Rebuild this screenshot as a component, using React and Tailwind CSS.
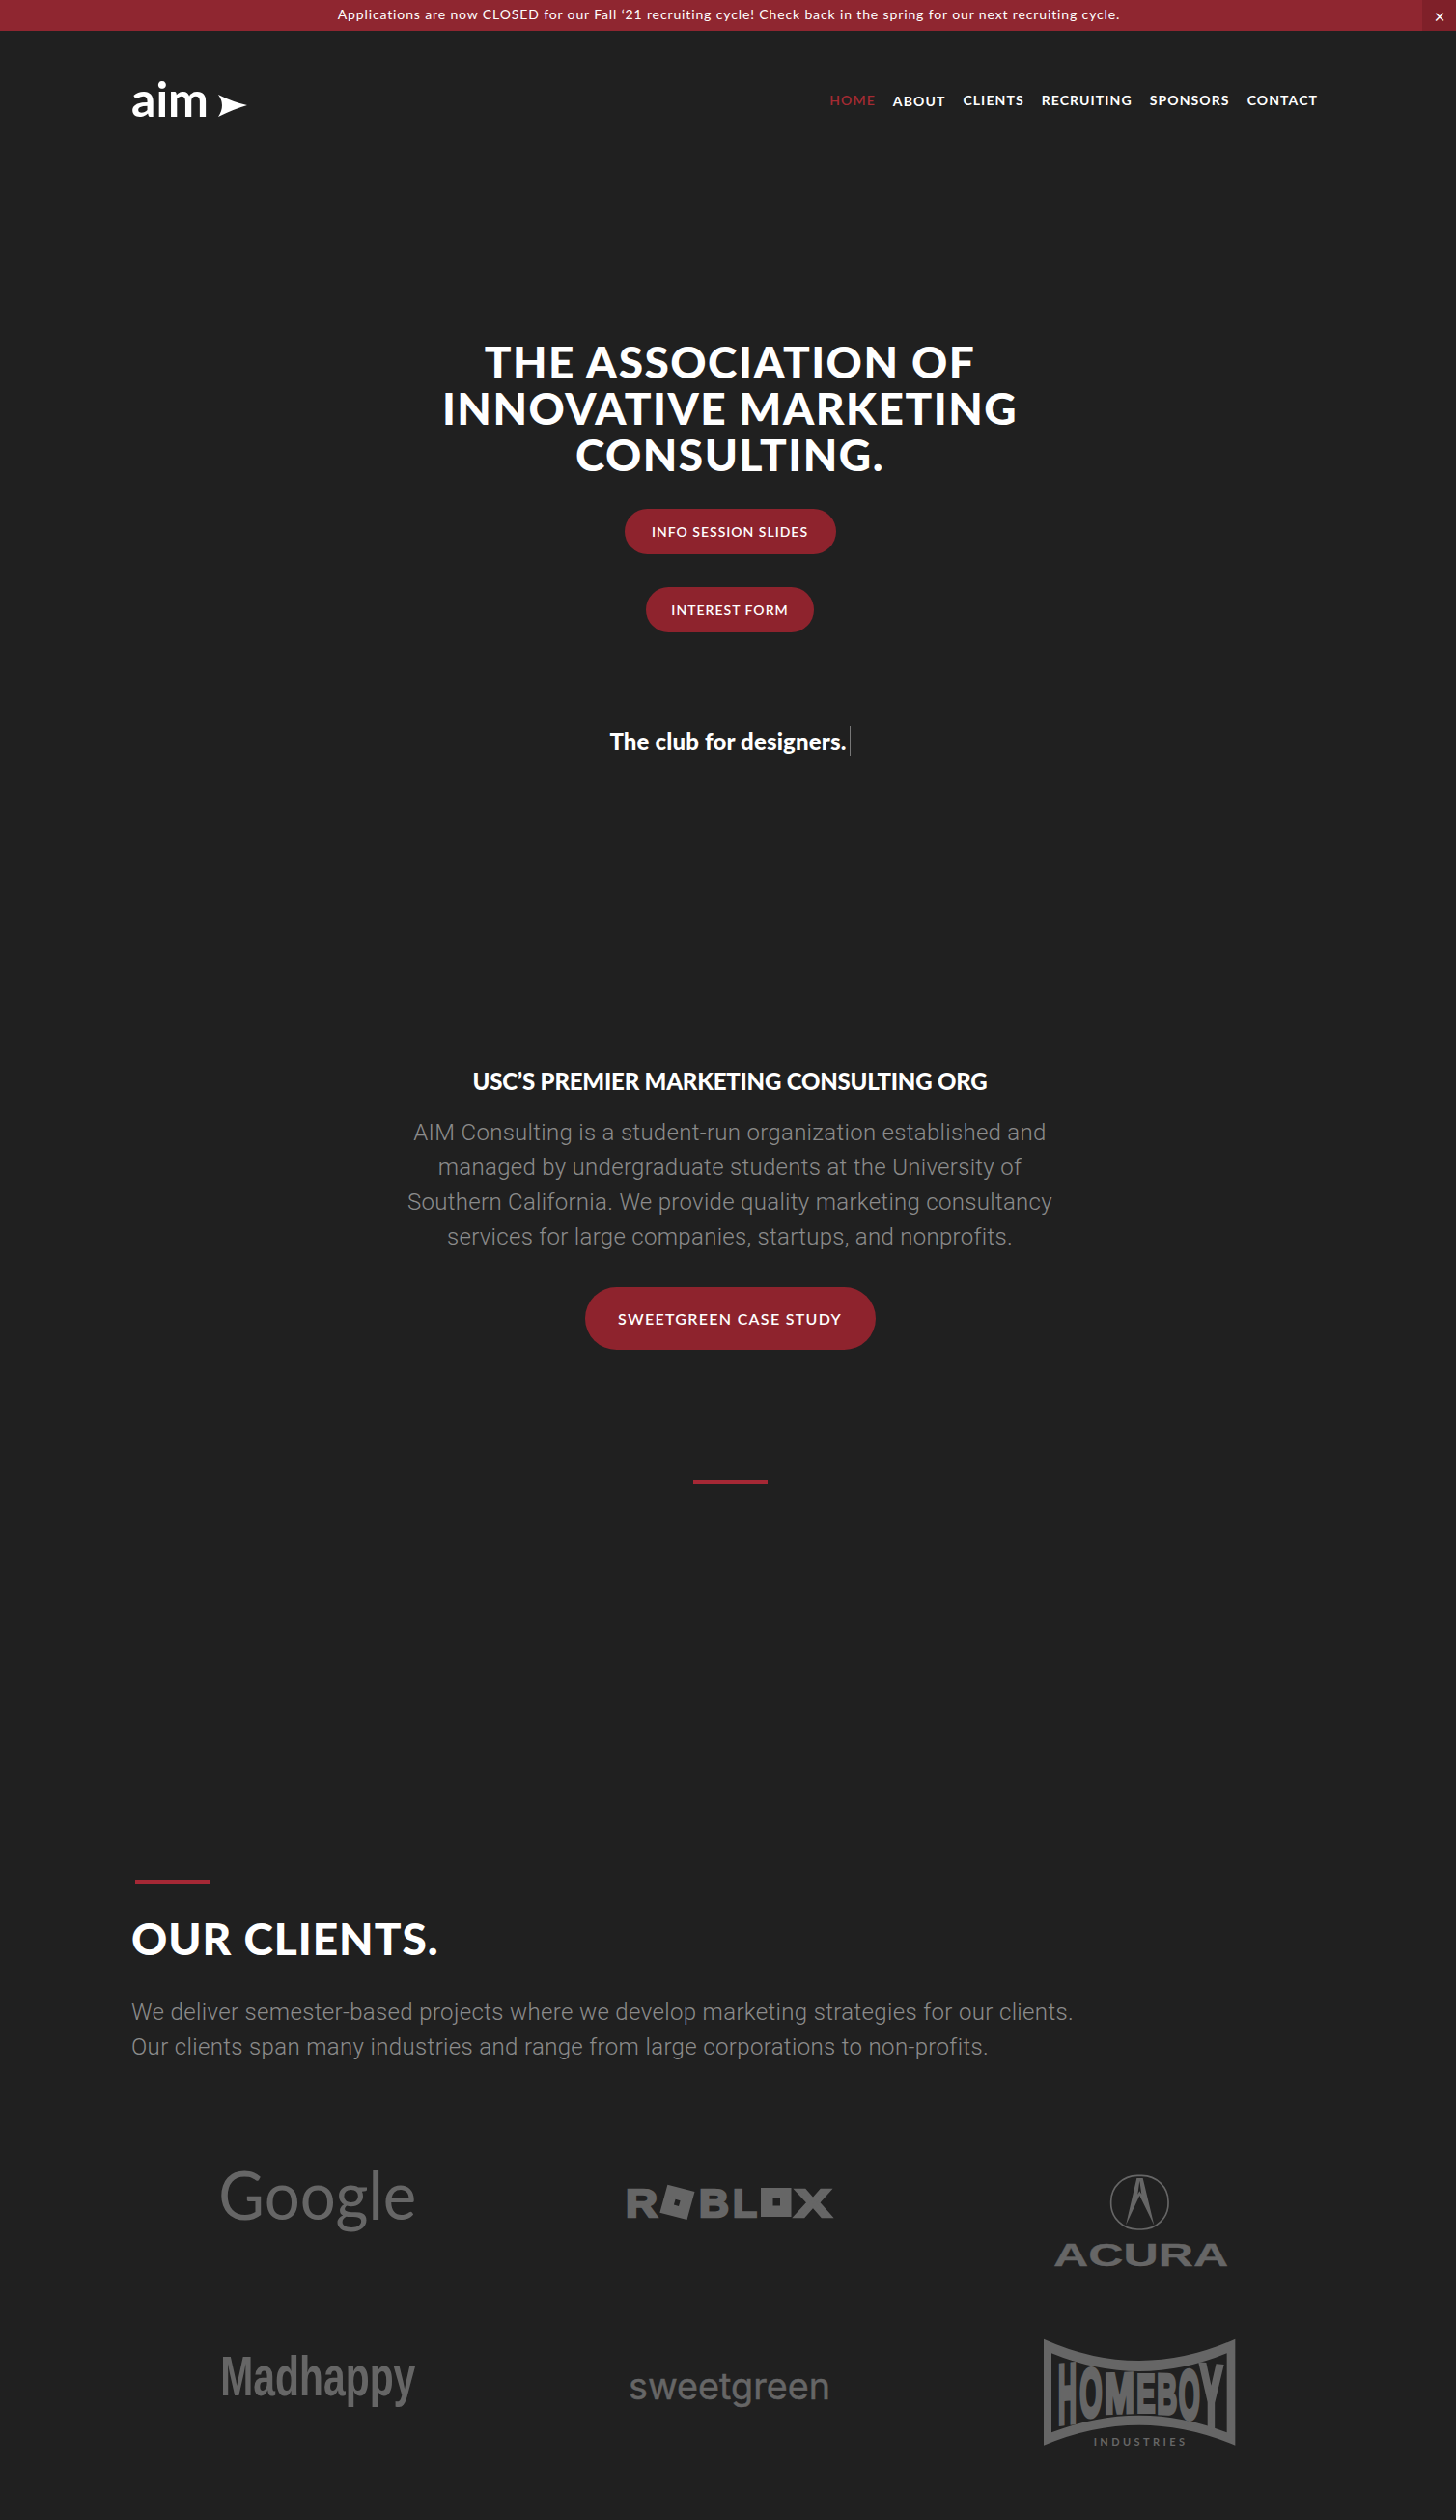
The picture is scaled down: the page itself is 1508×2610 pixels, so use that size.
const links = ['HOME', 'ABOUT', 'CLIENTS', 'RECRUITING', 'SPONSORS', 'CONTACT'];

// letters of the Homeboy mark, each stretched to its spot under the arc
const homeboy = [
  { c: 'H', x0: 108, x1: 165, t: 122, b: 300, skew: -6 },
  { c: 'O', x0: 175, x1: 245, t: 135, b: 280, skew: -4 },
  { c: 'M', x0: 252, x1: 345, t: 148, b: 268, skew: -2 },
  { c: 'E', x0: 352, x1: 410, t: 152, b: 265, skew: 0 },
  { c: 'B', x0: 415, x1: 478, t: 148, b: 268, skew: 2 },
  { c: 'O', x0: 482, x1: 548, t: 135, b: 282, skew: 4 },
  { c: 'Y', x0: 548, x1: 618, t: 118, b: 305, skew: 6 },
];

const Pill = ({ children, className }) => (
  <a className={`flex items-center justify-center rounded-full bg-[#8e232d] text-white font-['Lato'] font-semibold uppercase ${className}`}>
    {children}
  </a>
);

const Rule = ({ className }) => <div className={`h-[4px] w-[77px] bg-[#a52835] ${className}`}></div>;

const Acura = () => (
  <svg viewBox="-12 0 750 450" className="h-[150px] w-[250px]">
    <rect x="272" y="70" width="178" height="167" rx="82" ry="80" fill="none" stroke="#666" strokeWidth="5" />
    <path d="M352 78H371L406 224L361 132L318 224Z M361 86L355 128L361 118L367 128Z" fill="#666" fillRule="evenodd" />
    <text x="93" y="350" fontSize="100" textLength="544" lengthAdjust="spacingAndGlyphs" className="fill-[#666] stroke-[#666] font-['Liberation_Sans'] font-bold">
      ACURA
    </text>
  </svg>
);

const Homeboy = () => (
  <svg viewBox="-12 0 750 450" className="h-[150px] w-[250px]">
    <path
      d="M63 38Q360 172 658 38V368Q360 242 63 368Z M87 82V328Q360 222 632 328V82Q360 194 87 82Z"
      fill="#666"
      fillRule="evenodd"
    />
    {homeboy.map((l, i) => (
      <text
        key={i}
        x="0"
        y="0"
        fontSize="100"
        textLength={l.x1 - l.x0}
        lengthAdjust="spacingAndGlyphs"
        transform={`translate(${l.x0} ${l.b}) skewY(${l.skew}) scale(1 ${(l.b - l.t) / 69})`}
        strokeWidth="7"
        className="fill-[#666] stroke-[#666] font-['Liberation_Sans'] font-bold"
      >
        {l.c}
      </text>
    ))}
    <text x="218" y="370" fontSize="33" textLength="283" className="fill-[#666] font-['Lato'] font-bold">
      INDUSTRIES
    </text>
  </svg>
);

const App = () => {
  return (
    <div className="min-h-[2610px] bg-[#202020] font-['Lato'] text-white">
      <div className="relative flex h-8 items-center justify-center bg-[#8f2630] pb-[2px] pl-[2px] text-[14px] leading-none tracking-[0.87px]">
        <p>Applications are now CLOSED for our Fall ‘21 recruiting cycle! Check back in the spring for our next recruiting cycle.</p>
        <button className="absolute right-0 top-0 flex h-8 w-[35px] items-center justify-center bg-[#7f2029] pl-[2px] text-[19px]">×</button>
      </div>

      <header className="flex h-36 items-center justify-between pl-[136px] pr-[143px]">
        <a className="flex items-end gap-[10px]">
          <span className="mt-[-4px] text-[50px] font-bold leading-[52px]">aim</span>
          <svg viewBox="0 0 30 23" className="mb-[7px] h-[23px] w-[30px]">
            <path d="M0 0Q16 8 30 11Q16 15 0 23Q8 11 0 0Z" fill="#fff" />
          </svg>
        </a>
        <nav className="flex items-center gap-[18px] text-[14px] font-bold leading-none tracking-[1.1px]">
          {links.map((l, i) => (
            <a key={l} className={i === 0 ? 'font-semibold text-[#a52b33]' : i === 1 ? 'mt-[2px]' : ''}>
              {l}
            </a>
          ))}
        </nav>
      </header>

      <section className="flex flex-col items-center pl-[4px] pt-[175px]">
        <h1 className="text-center text-[46px] font-black leading-[48px] tracking-[1.5px]">
          THE ASSOCIATION OF<br />INNOVATIVE MARKETING<br />CONSULTING.
        </h1>
        <Pill className="mt-[32px] h-[47px] w-[219px] text-[14px] tracking-[1px]">Info Session Slides</Pill>
        <Pill className="mt-[34px] h-[47px] w-[174px] text-[14px] tracking-[1px]">Interest Form</Pill>
        <p className="mt-[97px] flex items-center text-[24px] font-black leading-[31px] tracking-[0.15px]">
          The club for designers.
          <span className="ml-[3px] h-[31px] w-px bg-[#777]"></span>
        </p>
      </section>

      <section className="flex flex-col items-center pl-[4px] pt-[322px]">
        <h2 className="text-center text-[24px] font-black leading-[30px] tracking-[-0.2px]">USC’S PREMIER MARKETING CONSULTING ORG</h2>
        <p className="mt-[20px] text-center font-['Roboto'] text-[24px] font-light leading-[36px] tracking-[0.3px] text-[#8c8c8c]">
          AIM Consulting is a student-run organization established and<br />
          managed by undergraduate students at the University of<br />
          Southern California. We provide quality marketing consultancy<br />
          services for large companies, startups, and nonprofits.
        </p>
        <Pill className="mt-[34px] h-[65px] w-[301px] text-[16px] tracking-[1.3px]">Sweetgreen Case Study</Pill>
        <Rule className="mt-[135px]" />
      </section>

      <section className="px-[136px] pt-[410px]">
        <Rule className="ml-[4px]" />
        <h2 className="mt-[33px] text-[46px] font-black leading-[48px] tracking-[1px]">OUR CLIENTS.</h2>
        <p className="mt-[34px] font-['Roboto'] text-[24px] font-light leading-[36px] tracking-[0.35px] text-[#8c8c8c]">
          We deliver semester-based projects where we develop marketing strategies for our clients.<br />
          Our clients span many industries and range from large corporations to non-profits.
        </p>
      </section>

      <section className="mx-auto mt-[92px] grid w-[1279px] grid-cols-3 justify-items-center gap-y-[30px] pl-[3px]">
        <svg viewBox="205.67 2210 250 170" className="mt-[-20px] h-[170px] w-[250px]">
          <text fontSize="60" textLength="205" lengthAdjust="spacingAndGlyphs" transform="translate(227 2299) scale(1 1.17)" className="fill-[#666] font-['Lato'] font-normal">
            Google
          </text>
        </svg>
        <svg viewBox="631 2230 250 150" className="h-[150px] w-[250px]">
          <g className="fill-[#666] stroke-[#666] font-['Liberation_Sans'] font-bold" strokeWidth="2.5" fontSize="41">
            <text x="649" y="2296" textLength="33" lengthAdjust="spacingAndGlyphs">R</text>
            <text x="725" y="2296" textLength="31" lengthAdjust="spacingAndGlyphs">B</text>
            <text x="760" y="2296" textLength="25" lengthAdjust="spacingAndGlyphs">L</text>
            <text x="824" y="2296" textLength="38" lengthAdjust="spacingAndGlyphs">X</text>
          </g>
          <path d="M692.4 2262.7L720.5 2270L712.5 2299L684.4 2291.7Z M700.6 2277.8L698.9 2283.6L704 2285L705.6 2279.2Z" fill="#666" fillRule="evenodd" />
          <path d="M789 2266H820.5V2296H789Z M801.5 2277V2284.5H809V2277Z" fill="#666" fillRule="evenodd" />
        </svg>
        <Acura />
        <svg viewBox="205.67 2410 250 150" className="h-[150px] w-[250px]">
          <text fontSize="40" textLength="202" lengthAdjust="spacingAndGlyphs" transform="translate(229 2481) scale(1 1.45)" className="fill-[#666] font-['Liberation_Sans'] font-bold">
            Madhappy
          </text>
        </svg>
        <svg viewBox="631 2410 250 150" className="h-[150px] w-[250px]">
          <text x="652" y="2485" fontSize="38" textLength="209" lengthAdjust="spacingAndGlyphs" strokeWidth="0.5" className="fill-[#666] stroke-[#666] font-['Inter'] font-normal">
            sweetgreen
          </text>
        </svg>
        <Homeboy />
      </section>
    </div>
  );
};

export default App;
